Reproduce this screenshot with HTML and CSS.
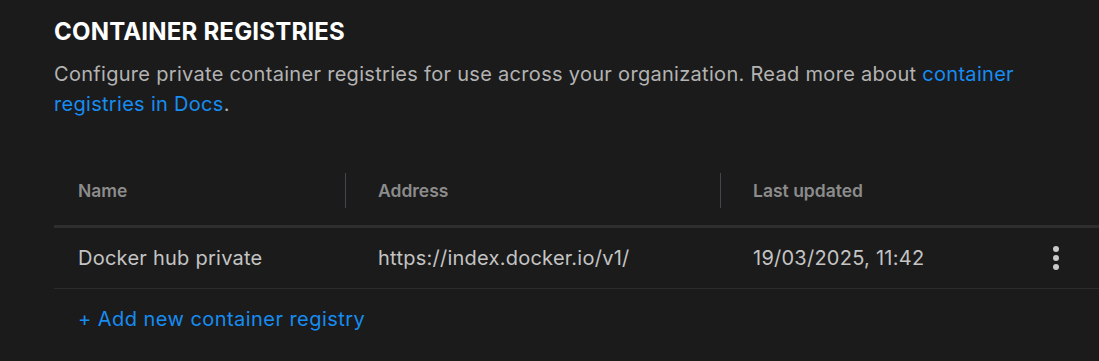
FILE: index.html
```html
<!DOCTYPE html>
<html lang="en">
<head>
  <meta charset="UTF-8">
  <title>Container registries</title>
  <link rel="stylesheet" href="styles.css">
</head>
<body>
<section class="registries">
  <h2 class="titulo">CONTAINER REGISTRIES</h2>
  <p class="descricao">
    Configure private container registries for use across your organization. Read more about
    <a href="#">container registries in Docs</a>.
  </p>

  <div class="tabela">
    <div class="linha cabecalho">
      <div class="celula">Name<span class="separador"></span></div>
      <div class="celula">Address<span class="separador"></span></div>
      <div class="celula">Last updated</div>
      <div class="celula acoes"></div>
    </div>
    <div class="linha">
      <div class="celula">Docker hub private</div>
      <div class="celula">https://index.docker.io/v1/</div>
      <div class="celula">19/03/2025, 11:42</div>
      <div class="celula acoes">
        <svg width="8" height="26" viewBox="0 0 8 26">
          <circle cx="4" cy="4" r="3" fill="#c9c9c9"/>
          <circle cx="4" cy="13" r="3" fill="#c9c9c9"/>
          <circle cx="4" cy="22" r="3" fill="#c9c9c9"/>
        </svg>
      </div>
    </div>
    <div class="adicionar">
      <a href="#">+ Add new container registry</a>
    </div>
  </div>
</section>
</body>
</html>
```

FILE: styles.css
```css
body {
  margin: 0;
  background: #1b1b1b;
  font-family: Inter, "Noto Sans", sans-serif;
  color: #c4c4c4;
}
a {
  color: #178cf2;
  text-decoration: none;
}
.registries {
  padding: 17px 0 0 54px;
}
.titulo {
  margin: 0;
  font-size: 24px;
  line-height: 30px;
  font-weight: 700;
  letter-spacing: 0.2px;
  color: #ffffff;
}
.descricao {
  margin: 12px 0 0;
  font-size: 20px;
  line-height: 30px;
  letter-spacing: 0.3px;
  color: #b3b3b3;
  max-width: 1000px;
}
.tabela {
  margin-top: 36px;
}
.linha {
  display: grid;
  grid-template-columns: 300px 375px 1fr 80px;
  height: 60px;
  align-items: center;
  border-bottom: 1px solid #2c2c2c;
  font-size: 20px;
  letter-spacing: 0.25px;
}
.linha.cabecalho {
  height: 70px;
  border-bottom: 3px solid #2e2e2e;
  font-size: 17.5px;
  font-weight: 600;
  letter-spacing: 0;
  color: #8c8c8c;
}
.celula {
  position: relative;
  padding-left: 24px;
  height: 100%;
  display: flex;
  align-items: center;
}
.separador {
  position: absolute;
  right: 8px;
  top: 18px;
  width: 1px;
  height: 35px;
  background: #45454f;
}
.acoes {
  padding-left: 0;
  justify-content: center;
  padding-right: 6px;
}
.adicionar {
  height: 60px;
  display: flex;
  align-items: center;
  padding-left: 24px;
  font-size: 20px;
  letter-spacing: 0.45px;
}
```
